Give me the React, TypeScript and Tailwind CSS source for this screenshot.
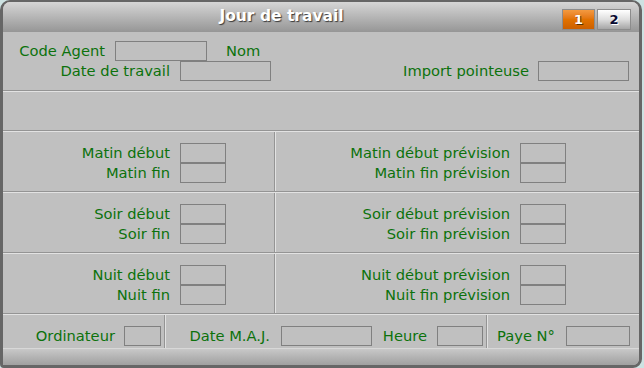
import React from 'react';

// champ de saisie vide, même gris que le fond
const Field = ({ w }: { w: string }) => (
  <div className={`${w} h-[20px] shrink-0 border border-[#808080] bg-[#c0c0c0]`} />
);

const HSep = () => <div className="h-[2px] shrink-0 border-t border-t-[#949494] border-b border-b-[#e2e2e2]" />;
const VSep = () => <div className="w-[2px] shrink-0 border-l border-l-[#949494] border-r border-r-[#e2e2e2]" />;

const Label = ({ children, w = '' }: { children: React.ReactNode; w?: string }) => (
  <div className={`${w} shrink-0 text-right leading-[20px] text-[#0c720c] whitespace-nowrap`}>{children}</div>
);

const shifts = [
  { left: ['Matin début', 'Matin fin'], right: ['Matin début prévision', 'Matin fin prévision'] },
  { left: ['Soir début', 'Soir fin'], right: ['Soir début prévision', 'Soir fin prévision'] },
  { left: ['Nuit début', 'Nuit fin'], right: ['Nuit début prévision', 'Nuit fin prévision'] },
];

export default function App() {
  return (
    <div className="w-[644px] h-[368px] bg-[#cde2e2] font-['DejaVu_Sans','Verdana',sans-serif] text-[14.7px]">
      <div className="w-[642px] h-[368px] flex flex-col overflow-hidden bg-[#c0c0c0] border-[3px] border-t-2 border-[#666666] rounded-tl-[10px] rounded-tr-[10px] rounded-br-[9px] rounded-bl-[4px]">
        {/* Barre de titre */}
        <div className="h-[30px] shrink-0 flex items-center bg-linear-to-b from-[#d6d6d6] to-[#969696]">
          <div className="flex-1 text-center pr-[2px] text-white font-bold text-[15.5px] [text-shadow:1px_1px_1px_#3a3a3a]">
            Jour de travail
          </div>
          <div className="flex gap-[2px] pr-[8px] pt-[7px] self-start">
            <div className="w-[33px] h-[21px] border border-[#8c8c8c] bg-linear-to-b from-[#f39a40] via-[#e27200] to-[#cc6000] flex items-center justify-center text-white font-bold text-[13px] [text-shadow:1px_1px_0_#5a3000]">
              1
            </div>
            <div className="w-[34px] h-[21px] border border-[#8c8c8c] bg-linear-to-b from-[#ffffff] via-[#dedede] to-[#a6a6a6] flex items-center justify-center text-[#0a0a30] font-bold text-[13px] [text-shadow:1px_1px_0_#ffffff]">
              2
            </div>
          </div>
        </div>

        {/* En-tête */}
        <div className="h-[58px] shrink-0 pt-[9px]">
          <div className="flex items-center">
            <Label w="w-[102px]">Code Agent</Label>
            <div className="ml-[10px]"><Field w="w-[92px]" /></div>
            <div className="ml-[19px] leading-[20px] text-[#0c720c]">Nom</div>
          </div>
          <div className="flex items-center pr-[10px]">
            <Label w="w-[167px]">Date de travail</Label>
            <div className="ml-[10px]"><Field w="w-[91px]" /></div>
            <div className="flex-1" />
            <Label>Import pointeuse</Label>
            <div className="ml-[9px]"><Field w="w-[91px]" /></div>
          </div>
        </div>
        <HSep />
        <div className="h-[38px] shrink-0" />
        <HSep />

        {/* Horaires */}
        {shifts.map((s, i) => (
          <React.Fragment key={i}>
            <div className="h-[59px] shrink-0 flex">
              <div className="w-[271px] pt-[11px]">
                {s.left.map((l) => (
                  <div key={l} className="flex">
                    <Label w="w-[167px]">{l}</Label>
                    <div className="ml-[10px]"><Field w="w-[46px]" /></div>
                  </div>
                ))}
              </div>
              <VSep />
              <div className="flex-1 pt-[11px]">
                {s.right.map((l) => (
                  <div key={l} className="flex">
                    <Label w="w-[234px]">{l}</Label>
                    <div className="ml-[10px]"><Field w="w-[46px]" /></div>
                  </div>
                ))}
              </div>
            </div>
            <HSep />
          </React.Fragment>
        ))}

        {/* Pied */}
        <div className="h-[33px] shrink-0 flex">
          <div className="w-[161px] flex pt-[11px]">
            <Label w="w-[112px]">Ordinateur</Label>
            <div className="ml-[9px]"><Field w="w-[37px]" /></div>
          </div>
          <VSep />
          <div className="w-[320px] flex pt-[11px]">
            <Label w="w-[104px]">Date M.A.J.</Label>
            <div className="ml-[11px]"><Field w="w-[91px]" /></div>
            <Label w="w-[55px]">Heure</Label>
            <div className="ml-[10px]"><Field w="w-[46px]" /></div>
          </div>
          <VSep />
          <div className="flex-1 flex pt-[11px] pl-[9px]">
            <div className="w-[58px] shrink-0 leading-[20px] text-[#0c720c] whitespace-nowrap">Paye N°</div>
            <div className="ml-[11px]"><Field w="w-[64px]" /></div>
          </div>
        </div>

        {/* Barre du bas */}
        <div className="flex-1 border-t border-t-[#d8d8d8] bg-linear-to-b from-[#c8c8c8] to-[#a0a0a0]" />
      </div>
    </div>
  );
}
